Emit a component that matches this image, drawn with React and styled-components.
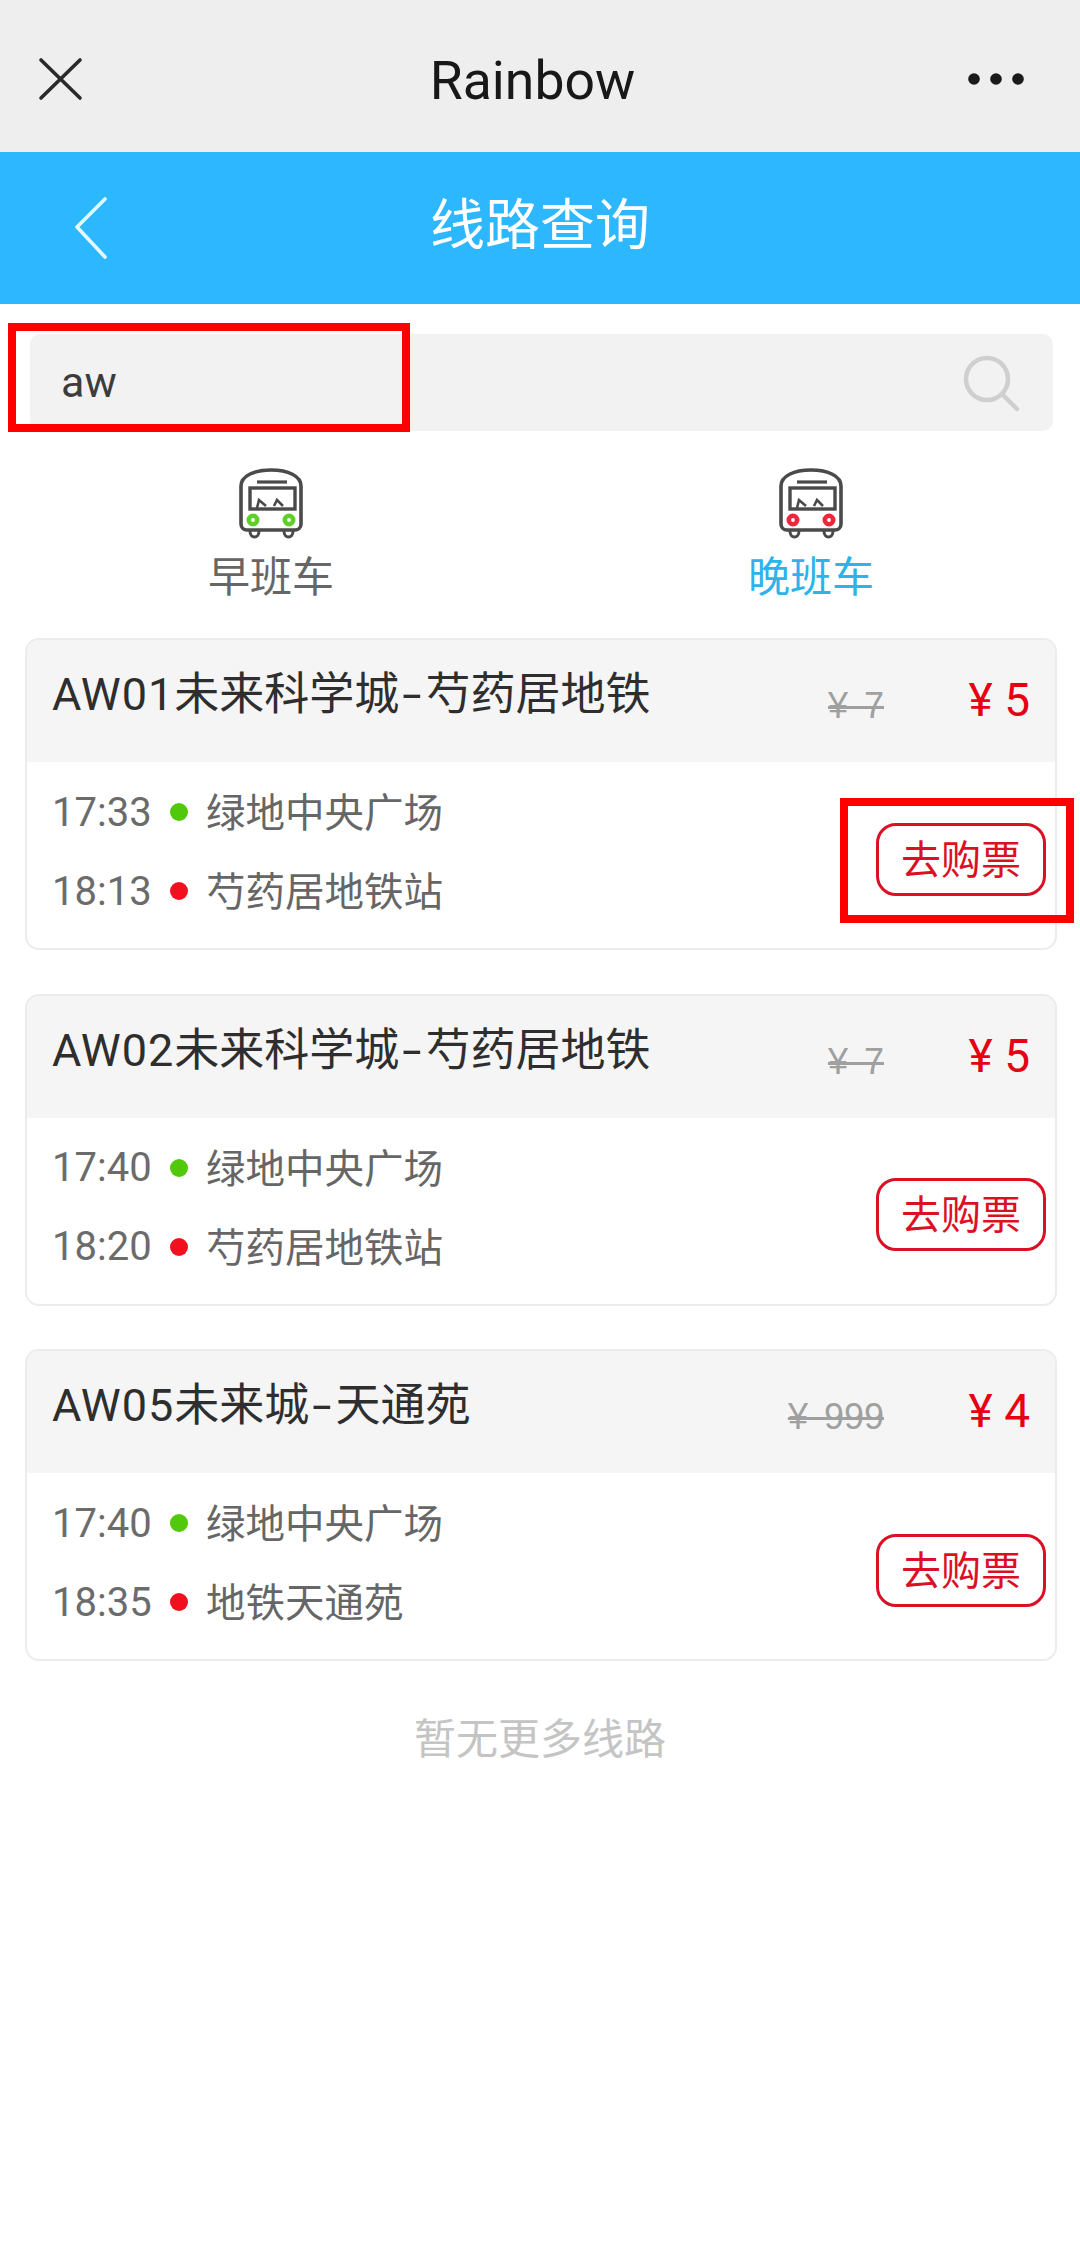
import React from "react";
import styled, { createGlobalStyle } from "styled-components";

const Global = createGlobalStyle`
  html, body { margin: 0; padding: 0; background: #fff; }
  body { font-family: Roboto, "Noto Sans CJK SC", sans-serif; }
  * { box-sizing: border-box; }
`;

const Page = styled.div`
  width: 1080px;
  height: 2265px;
  background: #fff;
  overflow: hidden;
`;

const WeChatBar = styled.header`
  height: 152px;
  background: #eeeeee;
  display: grid;
  grid-template-columns: 1fr auto 1fr;
  align-items: center;
  padding: 6px 56px 0 38px;
`;
const BarSide = styled.div`
  display: flex;
  justify-content: ${(p) => (p.$end ? "flex-end" : "flex-start")};
  align-items: center;
`;
const WeChatTitle = styled.h1`
  margin: 4px 0 0 3px;
  font-size: 53.5px;
  font-weight: 400;
  color: #181818;
  line-height: 1;
`;

const PageHead = styled.div`
  height: 152px;
  background: #2db7ff;
  display: grid;
  grid-template-columns: 1fr auto 1fr;
  align-items: center;
  padding: 0 74px;
`;
const PageTitle = styled.h2`
  margin: 0 0 6px;
  font-size: 55px;
  font-weight: 400;
  color: #fff;
  line-height: 1;
`;

const SearchWrap = styled.div`
  padding: 30px 27px 0 30px;
  position: relative;
`;
const SearchBox = styled.div`
  height: 97px;
  background: #f2f2f2;
  border-radius: 10px;
  display: flex;
  align-items: center;
  justify-content: space-between;
  padding: 0 33px 0 31px;
`;
const SearchText = styled.span`
  font-size: 43px;
  color: #3c3c3c;
  line-height: 1;
`;
const Frame = styled.div`
  position: absolute;
  border: 8px solid #ff0000;
  pointer-events: none;
`;
const SearchFrame = styled(Frame)`
  left: 8px;
  top: 19px;
  width: 402px;
  height: 109px;
`;

const Tabs = styled.nav`
  display: grid;
  grid-template-columns: 1fr 1fr;
  padding-top: 37px;
  height: 207px;
`;
const Tab = styled.div`
  display: flex;
  flex-direction: column;
  align-items: center;
  gap: 9px;
`;
const BusWrap = styled.div`
  height: 71px;
  margin-left: 3px;
`;
const TabLabel = styled.span`
  font-size: 42px;
  line-height: 60px;
  color: ${(p) => p.$color};
  padding-left: 2px;
`;

const List = styled.main`
  display: flex;
  flex-direction: column;
  gap: 43.5px;
  padding: 0 23px 0 25px;
`;
const Card = styled.article`
  height: 312px;
  border: 2px solid #ececec;
  border-radius: 14px;
  display: flex;
  flex-direction: column;
  position: relative;
`;
const CardHead = styled.div`
  height: 122px;
  background: #f5f5f5;
  border-radius: 12px 12px 0 0;
  display: flex;
  align-items: flex-start;
  padding: 30px 25px 0 25px;
`;
const RouteName = styled.div`
  flex: 1;
  font-size: 45px;
  line-height: 50px;
  color: #2e2e2e;
  white-space: nowrap;
`;
const RouteCode = styled.span`
  letter-spacing: 1px;
`;
const Dash = styled.span`
  display: inline-block;
  width: 26px;
  text-align: center;
  transform: scaleX(1.55);
`;
const OldPrice = styled.span`
  margin-top: 16px;
  font-size: 36px;
  line-height: 40px;
  color: #a0a0a0;
  text-decoration: line-through;
  text-decoration-thickness: 3px;
  word-spacing: 6px;
  font-family: "Liberation Sans", sans-serif;
`;
const NewPrice = styled.span`
  width: 146px;
  text-align: right;
  margin-top: 5px;
  font-size: 46px;
  line-height: 50px;
  color: #e60012;
`;
const CardBody = styled.div`
  flex: 1;
  display: flex;
  justify-content: space-between;
  align-items: center;
  padding: 0 9px 0 25px;
`;
const Stops = styled.div`
  display: flex;
  flex-direction: column;
  gap: 19px;
  margin-top: -7px;
`;
const Stop = styled.div`
  display: flex;
  align-items: center;
  height: 60px;
  font-size: 39.5px;
  color: #666;
`;
const Time = styled.span`
  width: 118px;
  font-size: 40px;
  color: #6b6b6b;
`;
const Dot = styled.i`
  width: 18px;
  height: 18px;
  border-radius: 50%;
  background: ${(p) => p.$color};
  margin-right: 18px;
`;
const StopName = styled.span`
  padding-bottom: 5px;
`;
const BuyButton = styled.button`
  width: 170px;
  height: 73px;
  margin-top: 8px;
  border: 3px solid #dc1025;
  border-radius: 20px;
  background: #fff;
  color: #dc1025;
  font: 400 40px/1 Roboto, "Noto Sans CJK SC", sans-serif;
  padding: 3px 0 0;
`;
const BuyFrame = styled(Frame)`
  left: 813px;
  top: 158px;
  width: 234px;
  height: 125px;
`;
const EndNote = styled.p`
  margin: 54px 0 0;
  text-align: center;
  font-size: 42px;
  line-height: 50px;
  color: #c4c4c4;
`;

const CloseIcon = () => (
  <svg width="46" height="46" viewBox="0 0 46 46" fill="none" stroke="#2a2a2a" strokeWidth="3.6" strokeLinecap="round">
    <path d="M3 4 L42 42 M42 4 L3 42" />
  </svg>
);
const MoreIcon = () => (
  <svg width="56" height="14" viewBox="0 0 56 14" fill="#1a1a1a">
    <circle cx="6" cy="7" r="5.8" />
    <circle cx="28" cy="7" r="5.8" />
    <circle cx="50" cy="7" r="5.8" />
  </svg>
);
const BackIcon = () => (
  <svg width="36" height="64" viewBox="0 0 36 64" fill="none" stroke="#e6f8ff" strokeWidth="3.6" strokeLinecap="round" strokeLinejoin="round">
    <path d="M31 3 L3 31 L31 61" />
  </svg>
);
const SearchIcon = () => (
  <svg width="58" height="58" viewBox="0 0 58 58" fill="none" stroke="#cfcfcf" strokeWidth="4.5" strokeLinecap="round">
    <circle cx="25" cy="25" r="21" />
    <path d="M41 41 L55 55" />
  </svg>
);
const BusIcon = ({ light }) => (
  <svg width="65" height="71" viewBox="0 0 65 71" fill="none" stroke="#4a4a4a">
    <path d="M2 18 C2 8 15 2 32 2 C49 2 62 8 62 18 L62 56 C62 60 59 62 56 62 L8 62 C5 62 2 60 2 56 Z" strokeWidth="3.6" />
    <path d="M18 14 H48" strokeWidth="3.2" />
    <rect x="11" y="20" width="45" height="21" strokeWidth="3.4" />
    <path d="M18 40 L20 32 L27 38 M35 38 L38 32 L44 38" strokeWidth="2.6" />
    <path d="M11 63 C11 71 20 71 20 63 M45 63 C45 71 54 71 54 63" strokeWidth="3" />
    <circle cx="14" cy="52" r="4.2" stroke={light} strokeWidth="4.6" />
    <circle cx="50" cy="52" r="4.2" stroke={light} strokeWidth="4.6" />
  </svg>
);

const routes = [
  { code: "AW01", from0: "未来科学城", to0: "芍药居地铁", old: "¥ 7", price: "¥ 5", t1: "17:33", t2: "18:13", from: "绿地中央广场", to: "芍药居地铁站" },
  { code: "AW02", from0: "未来科学城", to0: "芍药居地铁", old: "¥ 7", price: "¥ 5", t1: "17:40", t2: "18:20", from: "绿地中央广场", to: "芍药居地铁站" },
  { code: "AW05", from0: "未来城", to0: "天通苑", old: "¥ 999", price: "¥ 4", t1: "17:40", t2: "18:35", from: "绿地中央广场", to: "地铁天通苑" },
];

export default function App() {
  return (
    <Page>
      <Global />
      <WeChatBar>
        <BarSide><CloseIcon /></BarSide>
        <WeChatTitle>Rainbow</WeChatTitle>
        <BarSide $end><MoreIcon /></BarSide>
      </WeChatBar>
      <PageHead>
        <BarSide><BackIcon /></BarSide>
        <PageTitle>线路查询</PageTitle>
        <span />
      </PageHead>
      <SearchWrap>
        <SearchBox>
          <SearchText>aw</SearchText>
          <SearchIcon />
        </SearchBox>
        <SearchFrame />
      </SearchWrap>
      <Tabs>
        <Tab>
          <BusWrap><BusIcon light="#5fd02a" /></BusWrap>
          <TabLabel $color="#666666">早班车</TabLabel>
        </Tab>
        <Tab>
          <BusWrap><BusIcon light="#f0263a" /></BusWrap>
          <TabLabel $color="#2db2ea">晚班车</TabLabel>
        </Tab>
      </Tabs>
      <List>
        {routes.map((r, i) => (
          <Card key={r.code}>
            <CardHead>
              <RouteName><RouteCode>{r.code}</RouteCode>{r.from0}<Dash>-</Dash>{r.to0}</RouteName>
              <OldPrice>{r.old}</OldPrice>
              <NewPrice>{r.price}</NewPrice>
            </CardHead>
            <CardBody>
              <Stops>
                <Stop><Time>{r.t1}</Time><Dot $color="#52c80a" /><StopName>{r.from}</StopName></Stop>
                <Stop><Time>{r.t2}</Time><Dot $color="#f2101f" /><StopName>{r.to}</StopName></Stop>
              </Stops>
              <BuyButton>去购票</BuyButton>
            </CardBody>
            {i === 0 && <BuyFrame />}
          </Card>
        ))}
      </List>
      <EndNote>暂无更多线路</EndNote>
    </Page>
  );
}
